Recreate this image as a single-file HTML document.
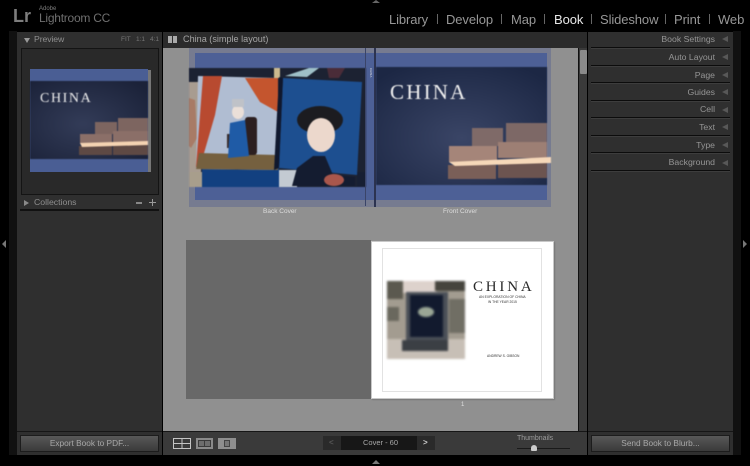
<!DOCTYPE html>
<html><head><meta charset="utf-8"><style>
*{box-sizing:border-box}
html,body{margin:0;padding:0;background:#000}
body{width:750px;height:466px;position:relative;overflow:hidden;font-family:"Liberation Sans",sans-serif;color:#a8a8a8}
.a{position:absolute}
.t{position:absolute;white-space:nowrap;line-height:1}
.sep{position:absolute;height:2px;left:591px;width:139px;background:#0c0c0c;border-bottom:1px solid #3d3d3d}
.r{position:absolute;right:35px;font-size:8.7px;color:#969696;white-space:nowrap;line-height:1;text-align:right}
.tri{position:absolute;left:722px;width:0;height:0;border-top:3px solid transparent;border-bottom:3px solid transparent;border-right:6px solid #585858}
.nav{position:absolute;top:13px;font-size:13px;color:#979797;line-height:1;white-space:nowrap;letter-spacing:-.1px}
.bar{position:absolute;top:14px;width:1px;height:10px;background:#666}
.btn{position:absolute;top:435px;height:17px;background:linear-gradient(#585858,#3a3a3a);border:1px solid #1c1c1c;color:#a8a8a8;font-size:8.3px;text-align:center;line-height:15px}
.art{filter:blur(.6px)}
</style></head><body>

<!-- top bar -->
<div class="t" style="left:13px;top:7px;font-size:18px;font-weight:bold;color:#7d7d7d">Lr</div>
<div class="t" style="left:39px;top:6px;font-size:6px;color:#7e7e7e">Adobe</div>
<div class="t" style="left:39px;top:12px;font-size:12px;color:#6f6f6f;letter-spacing:-.25px">Lightroom CC</div>
<div class="nav" style="left:389px">Library</div><div class="bar" style="left:437px"></div>
<div class="nav" style="left:446px">Develop</div><div class="bar" style="left:501px"></div>
<div class="nav" style="left:511px">Map</div><div class="bar" style="left:544px"></div>
<div class="nav" style="left:554px;color:#e8e8e8">Book</div><div class="bar" style="left:591px"></div>
<div class="nav" style="left:600px">Slideshow</div><div class="bar" style="left:665px"></div>
<div class="nav" style="left:674px">Print</div><div class="bar" style="left:709px"></div>
<div class="nav" style="left:718px">Web</div>

<!-- panels -->
<div class="a" style="left:9px;top:31px;width:8px;height:424px;background:#111"></div>
<div class="a" style="left:17px;top:32px;width:145px;height:423px;background:#2f2f2f"></div>
<div class="a" style="left:163px;top:32px;width:424px;height:16px;background:#2b2b2b"></div>
<div class="a" style="left:163px;top:48px;width:415px;height:383px;background:#909090"></div>
<div class="a" style="left:578px;top:48px;width:9px;height:383px;background:#3a3a3a;border-left:1px solid #111"></div>
<div class="a" style="left:580px;top:50px;width:7px;height:24px;background:#8a8a8a;border-radius:1px"></div>
<div class="a" style="left:163px;top:431px;width:424px;height:24px;background:#3a3a3a;border-top:1px solid #161616"></div>
<div class="a" style="left:588px;top:32px;width:145px;height:423px;background:#2f2f2f"></div>
<div class="a" style="left:733px;top:31px;width:8px;height:424px;background:#111"></div>

<!-- left panel -->
<div class="a" style="left:24px;top:38px;width:0;height:0;border-left:3px solid transparent;border-right:3px solid transparent;border-top:5px solid #999"></div>
<div class="t" style="left:34px;top:35px;font-size:8.7px;color:#8f8f8f;letter-spacing:-.1px">Preview</div>
<div class="t" style="left:121px;top:37px;font-size:6.5px;color:#757575">FIT</div>
<div class="t" style="left:136px;top:37px;font-size:6.5px;color:#757575">1:1</div>
<div class="t" style="left:150px;top:37px;font-size:6.5px;color:#757575">4:1</div>
<div class="a" style="left:21px;top:48px;width:138px;height:147px;background:#292929;border:1px solid #141414"></div>
<div class="a" style="left:30px;top:69px;width:118px;height:103px;background:#4a5e94"></div>
<div class="a" style="left:148px;top:70px;width:3px;height:102px;background:#777"></div>
<svg class="a art" style="left:30px;top:81px" width="118" height="78" viewBox="0 0 118 78">
<defs><radialGradient id="g1" cx=".45" cy=".55" r=".7"><stop offset="0" stop-color="#333c58"/><stop offset="1" stop-color="#1b2239"/></radialGradient></defs>
<rect width="118" height="78" fill="url(#g1)"/>
<rect x="65" y="41" width="22" height="12" fill="#7d6560"/><rect x="88" y="37" width="30" height="14" fill="#7d6560"/>
<rect x="50" y="53" width="32" height="10" fill="#8b6f68"/><rect x="83" y="50" width="35" height="11" fill="#8b6f68"/>
<rect x="49" y="65" width="33" height="9" fill="#5e4944"/><rect x="83" y="63" width="35" height="11" fill="#5e4944"/>
<polygon points="50,62 118,60 118,64 52,66" fill="#f4d3b2"/>
<text x="10" y="21" font-family="Liberation Serif" font-size="14" fill="#eee" letter-spacing="1.6">CHINA</text>
</svg>
<div class="a" style="left:24px;top:200px;width:0;height:0;border-top:3px solid transparent;border-bottom:3px solid transparent;border-left:5px solid #8a8a8a"></div>
<div class="t" style="left:34px;top:198px;font-size:8.7px;color:#8f8f8f">Collections</div>
<div class="a" style="left:136px;top:202px;width:6px;height:2px;background:#888"></div>
<div class="a" style="left:149px;top:202px;width:7px;height:1px;background:#999"></div>
<div class="a" style="left:152px;top:199px;width:1px;height:7px;background:#999"></div>
<div class="a" style="left:20px;top:209px;width:139px;height:2px;background:#111"></div>
<div class="a" style="left:17px;top:431px;width:145px;height:1px;background:#161616"></div>
<div class="btn" style="left:20px;width:139px">Export Book to PDF...</div>

<!-- title strip -->
<div class="a" style="left:168px;top:36px;width:4px;height:7px;background:#aaa"></div>
<div class="a" style="left:173px;top:36px;width:4px;height:7px;background:#aaa"></div>
<div class="t" style="left:183px;top:35px;font-size:9.100px;color:#a4a4a4">China (simple layout)</div>

<!-- cover spread -->
<div class="a" style="left:189px;top:48px;width:362px;height:159px;background:#767b90"></div>
<div class="a" style="left:195px;top:53px;width:352px;height:147px;background:#4d6096"></div>
<svg class="a art" style="left:189px;top:68px" width="186" height="119" viewBox="0 0 186 119">
<rect width="186" height="119" fill="#1c2232"/>
<rect x="0" y="14" width="12" height="90" fill="#a89c90"/>
<polygon points="0,30 6,32 8,70 2,80 0,78" fill="#a87b66"/>
<rect x="0" y="104" width="14" height="15" fill="#a89e8c"/>
<rect x="13" y="100" width="77" height="19" fill="#124080"/>
<rect x="90" y="102" width="18" height="17" fill="#c3cad2"/>
<rect x="168" y="104" width="9" height="15" fill="#171f33"/>
<rect x="85" y="0" width="6" height="10" fill="#cbb98e"/>
<polygon points="96,8 120,0 130,0 118,9" fill="#9fc0c8"/>
<polygon points="138,0 156,0 150,10 140,10" fill="#4a2c38"/>
<polygon points="9,8 89,10 89,102 7,101" fill="#b0bdd2"/>
<polygon points="14,8 33,8 26,47 11,99 7,99" fill="#b84a30"/>
<polygon points="56,10 89,10 89,44 71,34" fill="#c4552e"/>
<polygon points="10,85 89,87 89,102 7,101" fill="#75603f"/>
<rect x="56" y="49" width="12" height="38" fill="#2c1f20" rx="3"/>
<rect x="38" y="66" width="14" height="14" fill="#3a2b28"/>
<polygon points="41,55 56,52 60,88 39,90" fill="#1f5ba6"/>
<ellipse cx="49" cy="44" rx="6" ry="7" fill="#eadfd8"/>
<rect x="43" y="31" width="12" height="8" fill="#bfc2c8"/>
<polygon points="94,10 173,14 168,107 90,100" fill="#1d4f90"/>
<polygon points="90,9 94,10 90,100 85,102" fill="#10182e"/>
<ellipse cx="131" cy="52" rx="23" ry="14" fill="#1c1c20"/>
<ellipse cx="132" cy="67" rx="14" ry="17" fill="#ecd8cc"/>
<polygon points="103,118 108,100 124,88 136,88 144,107 166,109 166,118" fill="#141c30"/>
<ellipse cx="145" cy="112" rx="10" ry="6" fill="#a9574c"/>
<rect x="177" y="0" width="9" height="119" fill="#4d6096"/>
</svg>
<div class="a" style="left:365px;top:48px;width:1px;height:158px;background:#3a4468"></div>
<div class="a" style="left:374px;top:48px;width:2px;height:159px;background:#2c3350"></div>
<div class="t" style="left:369px;top:68px;font-size:3px;color:#ddd;writing-mode:vertical-rl">CHINA</div>
<svg class="a art" style="left:376px;top:67px" width="176" height="118" viewBox="0 0 176 118">
<defs><radialGradient id="g2" cx=".5" cy=".6" r=".7"><stop offset="0" stop-color="#3a4566"/><stop offset="1" stop-color="#1c2744"/></radialGradient></defs>
<rect width="171" height="118" fill="url(#g2)"/>
<rect x="96" y="61" width="31" height="18" fill="#7f6a68"/><rect x="130" y="56" width="41" height="20" fill="#7d6866"/>
<rect x="73" y="79" width="48" height="16" fill="#a58579"/><rect x="122" y="75" width="49" height="16" fill="#9d7f74"/>
<rect x="72" y="98" width="48" height="14" fill="#7a5f58"/><rect x="122" y="94" width="49" height="17" fill="#6c5450"/>
<polygon points="73,95 175,90 175,96 79,99" fill="#f6d8b9"/>
<text x="14" y="32" font-family="Liberation Serif" font-size="21" fill="#f0f0f0" letter-spacing="2.2">CHINA</text>
</svg>
<div class="t" style="left:263px;top:209px;font-size:6.5px;color:#dcdcdc">Back Cover</div>
<div class="t" style="left:443px;top:209px;font-size:6.5px;color:#dcdcdc">Front Cover</div>

<!-- page spread -->
<div class="a" style="left:186px;top:240px;width:185px;height:159px;background:#686868"></div>
<div class="a" style="left:371px;top:241px;width:183px;height:158px;background:#fff;border:1px solid #c8c8c8;box-shadow:1px 1px 1px #777"></div>
<div class="a" style="left:382px;top:248px;width:160px;height:144px;border:1px solid #e2e2e2"></div>
<svg class="a" style="left:387px;top:281px;filter:blur(1px)" width="78" height="78" viewBox="0 0 78 78">
<rect width="78" height="78" fill="#a39c90"/>
<rect x="16" y="0" width="34" height="12" fill="#ddd2cc"/>
<rect x="0" y="0" width="16" height="18" fill="#5b594f"/>
<rect x="48" y="0" width="30" height="10" fill="#45443d"/>
<rect x="0" y="26" width="12" height="14" fill="#6a685e"/>
<rect x="62" y="18" width="16" height="34" fill="#706e64"/>
<rect x="0" y="58" width="78" height="20" fill="#c7bfb6"/>
<rect x="19" y="11" width="42" height="49" fill="#4b5058"/>
<rect x="23" y="14" width="33" height="42" fill="#121a2e"/>
<rect x="15" y="59" width="46" height="11" fill="#3b3f44"/>
<ellipse cx="39" cy="31" rx="8" ry="5" fill="#9aa695"/>
</svg>
<div class="t" style="left:473px;top:280px;font-family:'Liberation Serif',serif;font-size:15px;color:#2a2a2a;letter-spacing:2.8px">CHINA</div>
<div class="t" style="left:479px;top:296px;font-size:3.4px;color:#333">AN EXPLORATION OF CHINA</div>
<div class="t" style="left:488px;top:301px;font-size:3.3px;color:#333">IN THE YEAR 2015</div>
<div class="t" style="left:487px;top:355px;font-size:3.3px;color:#333">ANDREW S. GIBSON</div>
<div class="t" style="left:461px;top:402px;font-size:6px;color:#e0e0e0">1</div>

<!-- bottom toolbar -->
<svg class="a" style="left:172px;top:436px" width="66" height="15" viewBox="0 0 66 15">
<rect x="1.500" y="2.500" width="17" height="10" fill="#3a3a3a" stroke="#c4c4c4"/>
<path d="M10 3V12M2 7.500H18" stroke="#c4c4c4"/>
<rect x="24" y="2" width="17" height="11" fill="#8a8a8a"/>
<rect x="26.500" y="4.500" width="12" height="6" fill="#6d6d6d" stroke="#3a3a3a"/><path d="M32.500 4V11" stroke="#3a3a3a"/>
<rect x="46" y="2" width="18" height="11" fill="#8f8f8f"/>
<rect x="52.500" y="4.500" width="5" height="6" fill="#777" stroke="#444"/>
</svg>
<div class="a" style="left:323px;top:436px;width:112px;height:14px;background:#171717;border-radius:1px"></div>
<div class="a" style="left:323px;top:436px;width:18px;height:14px;background:#2a2a2a"></div>
<div class="a" style="left:417px;top:436px;width:18px;height:14px;background:#2a2a2a"></div>
<div class="t" style="left:329px;top:439px;font-size:8px;font-weight:bold;color:#555">&lt;</div>
<div class="t" style="left:423px;top:439px;font-size:8px;font-weight:bold;color:#ccc">&gt;</div>
<div class="t" style="left:363px;top:439px;font-size:7.5px;color:#a8a8a8">Cover - 60</div>
<div class="t" style="left:517px;top:435px;font-size:7px;color:#9c9c9c">Thumbnails</div>
<div class="a" style="left:517px;top:448px;width:53px;height:1px;background:#1a1a1a"></div>
<div class="a" style="left:531px;top:445px;width:6px;height:6px;background:#ccc;border-radius:3px 3px 1px 1px"></div>

<!-- right panel -->
<div class="r" style="top:35px">Book Settings</div><div class="tri" style="top:36px"></div><div class="sep" style="top:47px"></div>
<div class="r" style="top:53px">Auto Layout</div><div class="tri" style="top:54px"></div><div class="sep" style="top:65px"></div>
<div class="r" style="top:71px">Page</div><div class="tri" style="top:72px"></div><div class="sep" style="top:82px"></div>
<div class="r" style="top:88px">Guides</div><div class="tri" style="top:89px"></div><div class="sep" style="top:100px"></div>
<div class="r" style="top:105px">Cell</div><div class="tri" style="top:107px"></div><div class="sep" style="top:117px"></div>
<div class="r" style="top:123px">Text</div><div class="tri" style="top:124px"></div><div class="sep" style="top:135px"></div>
<div class="r" style="top:141px">Type</div><div class="tri" style="top:142px"></div><div class="sep" style="top:152px"></div>
<div class="r" style="top:158px">Background</div><div class="tri" style="top:160px"></div><div class="sep" style="top:170px"></div>
<div class="a" style="left:588px;top:431px;width:145px;height:1px;background:#161616"></div>
<div class="btn" style="left:591px;width:139px">Send Book to Blurb...</div>

<!-- edge triangles -->
<div class="a" style="left:2px;top:240px;width:0;height:0;border-top:4px solid transparent;border-bottom:4px solid transparent;border-right:4px solid #777"></div>
<div class="a" style="left:743px;top:240px;width:0;height:0;border-top:4px solid transparent;border-bottom:4px solid transparent;border-left:4px solid #777"></div>
<div class="a" style="left:372px;top:0;width:0;height:0;border-left:4px solid transparent;border-right:4px solid transparent;border-bottom:3px solid #666"></div>
<div class="a" style="left:372px;top:460px;width:0;height:0;border-left:4px solid transparent;border-right:4px solid transparent;border-bottom:4px solid #777"></div>
</body></html>
